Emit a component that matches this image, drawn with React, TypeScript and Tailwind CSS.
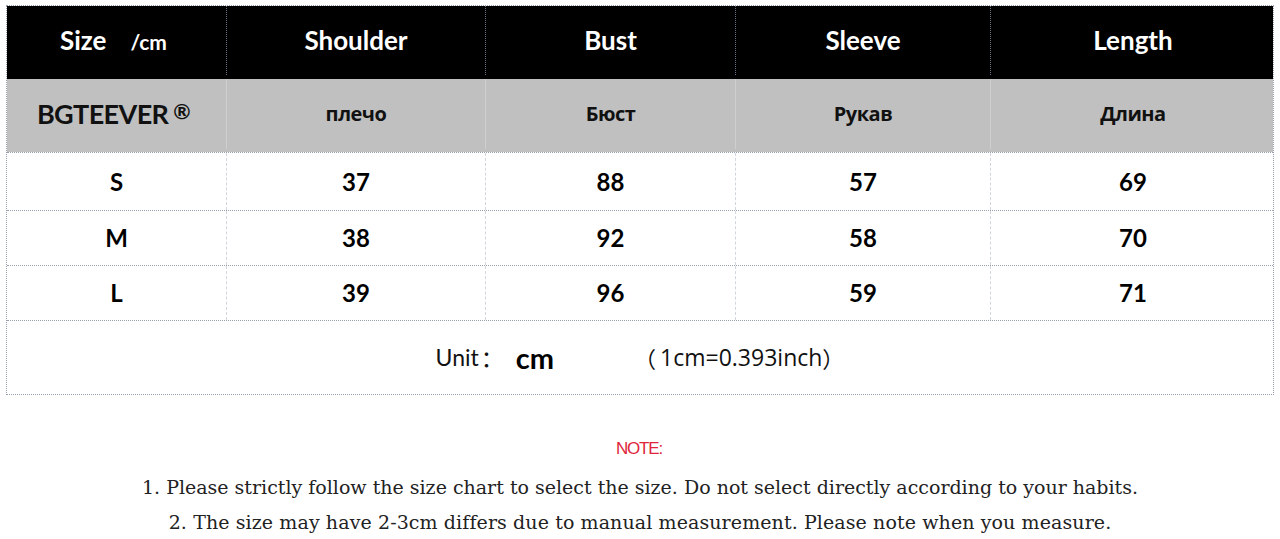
const cols = "grid-cols-[220px_259px_250px_255px_284px]";

const rows = [
  ["S", "37", "88", "57", "69"],
  ["M", "38", "92", "58", "70"],
  ["L", "39", "96", "59", "71"],
];

const head = ["Shoulder", "Bust", "Sleeve", "Length"];
const ru = ["плечо", "Бюст", "Рукав", "Длина"];

export default function App() {
  return (
    <div className="w-[1280px] h-[539px] bg-white overflow-hidden pt-[5px] pl-[6px] font-['Lato','Open_Sans',sans-serif]">
      <div className="w-[1268px] border border-dotted border-gray-400">
        {/* header */}
        <div className={`grid ${cols} h-[73px] bg-black text-white text-[26px] font-bold pb-[4px]`}>
          <div className="flex items-center justify-center border-r border-dotted border-gray-500 pr-[6px]">
            <span>Size</span>
            <span className="ml-[24px] text-[21px] mt-[2px]">/cm</span>
          </div>
          {head.map((h, i) => (
            <div
              key={h}
              className={`flex items-center justify-center ${i < 3 ? "border-r border-dotted border-gray-500" : ""}`}
            >
              {h}
            </div>
          ))}
        </div>

        {/* russian row */}
        <div className={`grid ${cols} h-[73px] bg-[#c0c0c0] text-[#111] pb-[3px]`}>
          <div className="flex items-center justify-center border-r border-[#cfcfcf] text-[27px] font-bold tracking-[-0.6px] pr-[6px]">
            BGTEEVER<span className="ml-[5px] text-[21px] -mt-[6px]">®</span>
          </div>
          {ru.map((h, i) => (
            <div
              key={h}
              className={`flex items-center justify-center text-[20px] font-bold font-['Liberation_Sans_Narrow','Open_Sans',sans-serif] tracking-[-0.5px] ${i < 3 ? "border-r border-[#cfcfcf]" : ""}`}
            >
              {h}
            </div>
          ))}
        </div>

        {/* data */}
        {rows.map((r, ri) => (
          <div
            key={r[0]}
            className={`grid ${cols} ${ri === 0 ? "h-[58px]" : "h-[55px]"} border-t border-dotted border-gray-400 text-[24px] font-bold text-black`}
          >
            {r.map((c, i) => (
              <div
                key={i}
                className={`flex items-center justify-center ${i < 4 ? "border-r border-dashed border-gray-300" : ""}`}
              >
                {c}
              </div>
            ))}
          </div>
        ))}

        {/* unit */}
        <div className="h-[74px] border-t border-dotted border-gray-400 flex items-center justify-center text-[23px] text-[#111]">
          <span>Unit</span>
          <span className="font-['Noto_Sans_CJK_SC',sans-serif] ml-[2px]">：</span>
          <span className="ml-[12px] text-[29px] font-bold text-black">cm</span>
          <span className="ml-[80px] font-['Noto_Sans_CJK_SC',sans-serif] text-[22px]">（</span>
          <span className="ml-[4px] font-['Open_Sans',sans-serif] text-[23px]">1cm=0.393inch</span>
          <span className="font-['Noto_Sans_CJK_SC',sans-serif] text-[22px]">）</span>
        </div>
      </div>

      {/* notes */}
      <div className="w-[1268px] flex flex-col items-center mt-[45px]">
        <div className="text-[17px] text-[#e0253a] font-['Liberation_Sans',sans-serif] tracking-[-1.2px] leading-[18px] ml-[-2px]">
          NOTE:
        </div>
        <div className="mt-[19px] text-[19px] leading-[20px] text-[#222] font-['DejaVu_Serif',serif]">
          1. Please strictly follow the size chart to select the size. Do not select directly according to your habits.
        </div>
        <div className="mt-[15px] text-[19px] leading-[20px] text-[#222] font-['DejaVu_Serif',serif] tracking-[0.1px]">
          2. The size may have 2-3cm differs due to manual measurement. Please note when you measure.
        </div>
      </div>
    </div>
  );
}
